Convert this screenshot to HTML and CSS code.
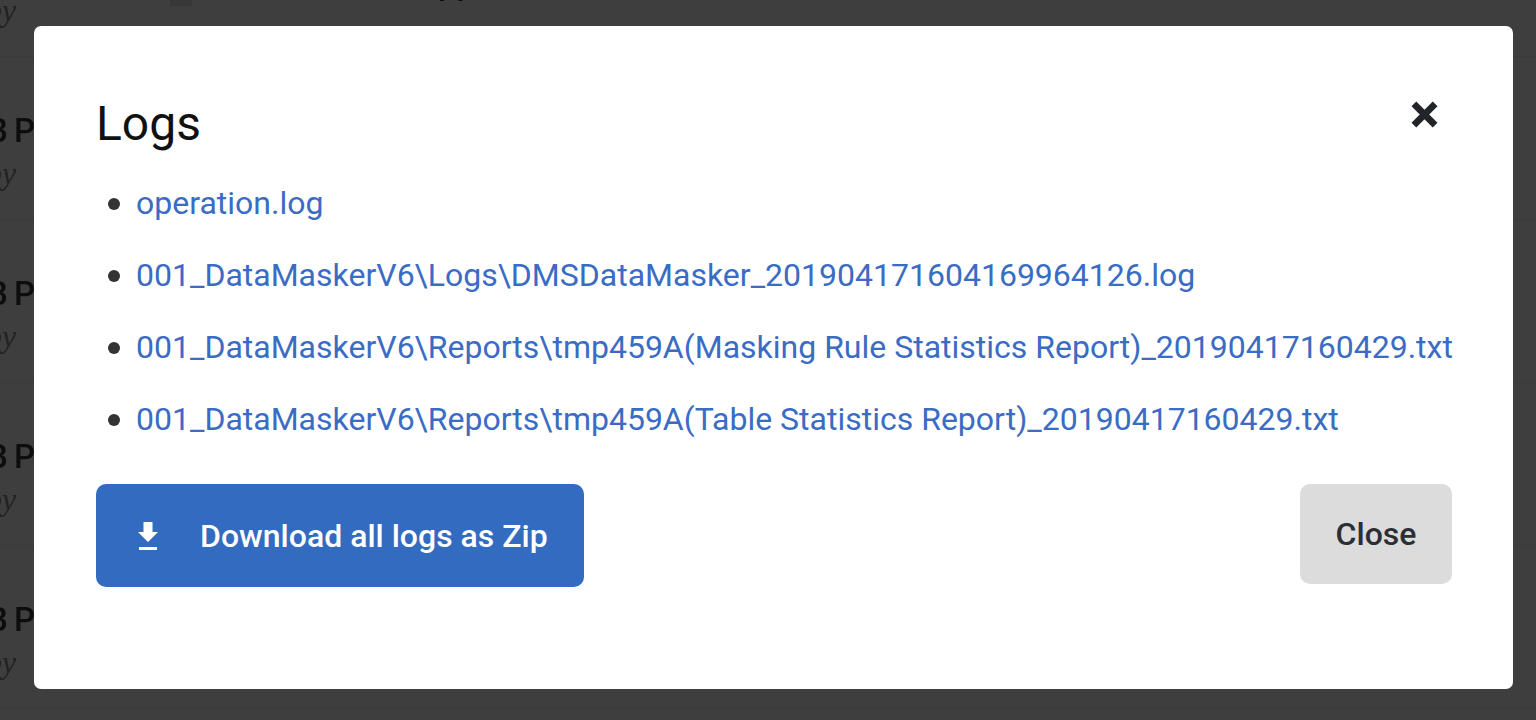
FILE: index.html
```html
<!DOCTYPE html>
<html lang="en">
<head>
<meta charset="utf-8">
<title>Logs</title>
<link rel="stylesheet" href="styles.css">
</head>
<body>
<div class="backdrop">
  <div class="page-row">
    <span class="row-title">B P</span><span class="row-sub">by</span>
    <span class="row-thumb"></span>
    <span class="row-peek">pp</span>
  </div>
  <div class="page-row"><span class="row-title">B P</span><span class="row-sub">by</span></div>
  <div class="page-row"><span class="row-title">B P</span><span class="row-sub">by</span></div>
  <div class="page-row"><span class="row-title">B P</span><span class="row-sub">by</span></div>
  <div class="page-row"><span class="row-title">B P</span><span class="row-sub">by</span></div>
</div>
<section class="modal">
  <header class="modal-head">
    <h1 class="modal-title">Logs</h1>
    <svg class="close-x" viewBox="0 0 28 28" aria-hidden="true"><path d="M3 3 L25 25 M25 3 L3 25"/></svg>
  </header>
  <ul class="log-list">
    <li><a href="#">operation.log</a></li>
    <li><a href="#">001_DataMaskerV6\Logs\DMSDataMasker_201904171604169964126.log</a></li>
    <li><a href="#">001_DataMaskerV6\Reports\tmp459A(Masking Rule Statistics Report)_20190417160429.txt</a></li>
    <li><a href="#">001_DataMaskerV6\Reports\tmp459A(Table Statistics Report)_20190417160429.txt</a></li>
  </ul>
  <footer class="modal-foot">
    <button class="btn btn-primary" type="button">
      <svg class="dl-icon" viewBox="0 0 20 28" aria-hidden="true"><path d="M5.500 0h9v10h5.500L10 20 0 10h5.500zM1 25h18v3H1z"/></svg>
      <span>Download all logs as Zip</span>
    </button>
    <button class="btn btn-close" type="button">Close</button>
  </footer>
</section>
</body>
</html>
```
FILE: styles.css
```css
* { box-sizing: border-box; }
html, body { margin: 0; height: 720px; overflow: hidden; }
body { background: #3e3e3e; font-family: Roboto, "Liberation Sans", sans-serif; position: relative; }
.backdrop { height: 720px; overflow: hidden; filter: blur(0.7px); }
.page-row { height: 163px; display: flex; flex-direction: column; white-space: nowrap; border-bottom: 1px solid #3a3a3a; position: relative; padding-top: 55px; }
.page-row:first-child { margin-top: -106px; }
.row-title { font-size: 33px; font-weight: 500; color: #0d0d0d; line-height: 38px; margin-left: -13px; letter-spacing: -1px; }
.row-sub { font-family: "Liberation Serif", serif; font-style: italic; font-size: 32px; color: #232323; line-height: 36px; margin-left: -14px; margin-top: 5px; }
.row-thumb { position: absolute; left: 170px; bottom: 50px; width: 22px; height: 10px; background: #373737; }
.row-peek { position: absolute; left: 438px; bottom: 54px; font-size: 33px; font-weight: 500; line-height: 38px; color: #0d0d0d; }
.modal { position: absolute; left: 34px; top: 26px; width: 1479px; height: 663px; background: #fff; border-radius: 7px; padding: 62px 61px 62px 62px; display: flex; flex-direction: column; }
.modal-head { display: flex; justify-content: space-between; align-items: flex-start; height: 79px; }
.modal-title { margin: 0; font-size: 48px; font-weight: 400; line-height: 72px; color: #111; }
.close-x { width: 27px; height: 27px; margin-top: 13px; margin-right: 14px; stroke: #212529; stroke-width: 7; fill: none; }
.log-list { margin: 0; padding: 0 0 0 40px; list-style: none; }
.log-list li { font-size: 32px; line-height: 72px; height: 72px; color: #333; white-space: nowrap; position: relative; }
.log-list li::before { content: ""; position: absolute; left: -28px; top: 31px; width: 12px; height: 12px; border-radius: 50%; background: #333; }
.log-list a { color: #3a6cc4; text-decoration: none; }
.modal-foot { display: flex; justify-content: space-between; align-items: flex-start; margin-top: 29px; }
.btn { border: 0; border-radius: 10px; font-family: inherit; font-size: 32px; font-weight: 500; display: flex; align-items: center; }
.btn-primary { width: 488px; height: 103px; background: #326bc0; color: #fff; padding-left: 42px; gap: 42px; }
.dl-icon { width: 20px; height: 28px; fill: #fff; }
.btn-close { width: 152px; height: 100px; background: #dcdcdc; color: #2b2f33; justify-content: center; }
```
